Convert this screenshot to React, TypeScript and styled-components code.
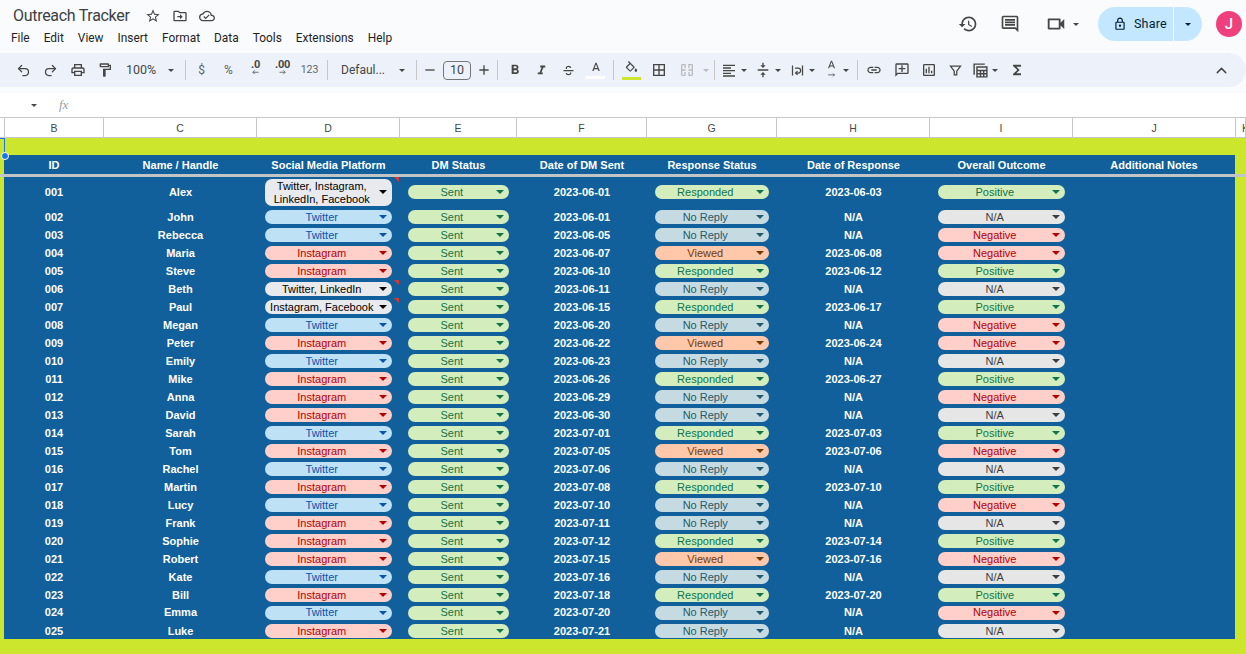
import React from "react";
import styled, { createGlobalStyle } from "styled-components";
import { Undo2, Redo2, ChevronUp } from "lucide-react";

const Global = createGlobalStyle`
  html, body { margin: 0; padding: 0; background: #f9fbfd; overflow: hidden; }
  body { font-family: "Liberation Sans", Arial, sans-serif; width: 1246px; height: 654px; }
`;

const Page = styled.div`
  width: 1246px;
  height: 654px;
  display: flex;
  flex-direction: column;
  background: #f9fbfd;
  overflow: hidden;
`;

/* ---------- top bar ---------- */
const TopBar = styled.header`
  height: 53px;
  display: flex;
  justify-content: space-between;
  flex: none;
`;
const TitleBlock = styled.div`
  display: flex;
  flex-direction: column;
`;
const TitleRow = styled.div`
  height: 28px;
  padding: 4px 0 0 13px;
  box-sizing: border-box;
  display: flex;
  align-items: center;
`;
const Title = styled.div`
  font: 400 16px/20px Roboto, sans-serif;
  letter-spacing: -0.3px;
  color: #3c4043;
  width: 126px;
  white-space: nowrap;
`;
const TitleIcon = styled.div`
  width: 27px;
  display: flex;
  justify-content: center;
  color: #444746;
`;
const Menu = styled.nav`
  display: flex;
  gap: 14px;
  padding: 2px 0 0 11px;
  font: 400 11.9px/16px Roboto, sans-serif;
  color: #1f1f1f;
`;
const Actions = styled.div`
  display: flex;
  align-items: center;
  height: 34px;
  margin-top: 7px;
  padding-right: 4px;
`;
const ActionIcon = styled.div<{ $w: number }>`
  width: ${(p) => p.$w}px;
  display: flex;
  align-items: center;
  justify-content: center;
  color: #444746;
`;
const ActionGap = styled.div`
  width: 10px;
`;
const SharePill = styled.div`
  width: 104px;
  height: 34px;
  border-radius: 17px;
  background: #c2e7ff;
  display: flex;
  align-items: center;
  color: #001d35;
  overflow: hidden;
  margin-left: 17px;
`;
const ShareMain = styled.div`
  width: 76px;
  height: 34px;
  display: flex;
  align-items: center;
  gap: 7px;
  padding-left: 15px;
  box-sizing: border-box;
  border-right: 1px solid #f9fbfd;
  font: 400 12.5px/16px Roboto, sans-serif;
  letter-spacing: 0.2px;
  flex: none;
`;
const ShareCaret = styled.div`
  flex: 1;
  display: flex;
  justify-content: center;
`;
const Avatar = styled.div`
  width: 26px;
  height: 26px;
  border-radius: 50%;
  background: #ef3f7c;
  color: #fff;
  margin-left: 14px;
  display: flex;
  align-items: center;
  justify-content: center;
  font: 500 15px/26px Roboto, sans-serif;
`;

/* ---------- toolbar ---------- */
const Toolbar = styled.div`
  height: 34px;
  flex: none;
  background: #edf2fa;
  border-radius: 0 17px 17px 0;
  display: flex;
  align-items: center;
  padding: 0 11px 0 10px;
  box-sizing: border-box;
  color: #444746;
`;
const Slot = styled.div<{ $w?: number }>`
  width: ${(p) => p.$w ?? 27}px;
  flex: none;
  height: 24px;
  display: flex;
  align-items: center;
  justify-content: center;
`;
const CaretSlot = styled(Slot)`
  width: 8px;
`;
const ToolGroup = styled.div<{ $w: number }>`
  width: ${(p) => p.$w}px;
  flex: none;
  display: flex;
  align-items: center;
`;
const Sep = styled.div<{ $w: number }>`
  width: ${(p) => p.$w}px;
  flex: none;
  display: flex;
  justify-content: center;
  &::after {
    content: "";
    width: 1px;
    height: 20px;
    background: #c7c7c7;
  }
`;
const Caret = styled.span<{ $c?: string; $off?: boolean }>`
  width: 0;
  height: 0;
  border-left: 3.5px solid transparent;
  border-right: 3.5px solid transparent;
  border-top: 3.5px solid ${(p) => (p.$off ? "#b9bcbf" : p.$c ?? "#444746")};
  display: inline-block;
`;
const ZoomSelect = styled.div`
  width: 65px;
  flex: none;
  display: flex;
  align-items: center;
  justify-content: space-between;
  padding: 0 9px 0 8px;
  box-sizing: border-box;
  font: 400 12.5px/16px Roboto, sans-serif;
`;
const FontSelect = styled.div`
  width: 80px;
  flex: none;
  display: flex;
  align-items: center;
  justify-content: space-between;
  padding: 0 6px 0 10px;
  box-sizing: border-box;
  font: 400 12px/16px Roboto, sans-serif;
`;
const FormatGlyph = styled.span<{ $size?: number }>`
  font: 400 ${(p) => p.$size ?? 11}px/12px Roboto, sans-serif;
  color: #5f6368;
`;
const DecimalIcon = styled.div`
  display: flex;
  flex-direction: column;
  align-items: center;
  font: 700 11px/10px Roboto, sans-serif;
  letter-spacing: -0.3px;
  color: #444746;
  height: 20px;
`;
const SizeBox = styled.div`
  width: 28px;
  height: 19px;
  border: 1px solid #747775;
  border-radius: 4px;
  box-sizing: border-box;
  display: flex;
  align-items: center;
  justify-content: center;
  font: 400 12.5px/16px Roboto, sans-serif;
  color: #444746;
`;
const ColorStack = styled.div`
  display: flex;
  flex-direction: column;
  align-items: center;
  gap: 1px;
`;
const ColorBar = styled.div<{ $c: string }>`
  width: 19px;
  height: 3px;
  background: ${(p) => p.$c};
`;
const Spacer = styled.div`
  flex: 1;
`;

/* ---------- formula bar ---------- */
const FormulaBar = styled.div`
  margin-top: 6px;
  height: 24px;
  flex: none;
  background: #fff;
  display: flex;
  align-items: center;
  padding-left: 31px;
`;
const FxLabel = styled.span`
  margin-left: 22px;
  font: italic 400 13px/16px "Liberation Serif", serif;
  color: #9aa0a6;
`;

/* ---------- sheet ---------- */
const ColumnBar = styled.div`
  height: 21px;
  flex: none;
  display: grid;
  grid-template-columns: 5px 99px 153px 143px 117px 130px 130px 153px 143px 163px 10px;
  background: #fff;
  border-top: 1px solid #c7c7c7;
  box-sizing: border-box;
`;
const ColumnCell = styled.div<{ $edge?: boolean }>`
  border-right: 1px solid #c7c7c7;
  border-bottom: 1px solid #c7c7c7;
  box-sizing: border-box;
  display: flex;
  align-items: center;
  justify-content: ${(p) => (p.$edge ? "flex-start" : "center")};
  padding-left: ${(p) => (p.$edge ? 6 : 0)}px;
  font: 400 10.5px/14px "Liberation Sans", Arial, sans-serif;
  color: #444746;
  overflow: hidden;
`;
const Sheet = styled.section`
  position: relative;
  flex: 1;
  background: #cbe62d;
  padding-top: 17px;
  box-sizing: border-box;
`;
const HeadRow = styled.div`
  margin: 0 11px 0 4px;
  height: 19px;
  display: grid;
  grid-template-columns: 100px 153px 143px 117px 130px 130px 153px 143px 162px;
  background: #11609b;
  align-items: start;
  text-align: center;
  font: 700 11px/20px "Liberation Sans", Arial, sans-serif;
  color: #fff;
`;
const Divider = styled.div`
  height: 3px;
  background: #c2c5c6;
`;
const Rows = styled.div`
  margin: 0 11px 0 4px;
  height: 462px;
  overflow: hidden;
  background: #11609b;
`;
const Row = styled.div<{ $h: number }>`
  height: ${(p) => p.$h}px;
  display: grid;
  grid-template-columns: 100px 153px 143px 117px 130px 130px 153px 143px 162px;
  align-items: center;
  &:first-child {
    margin-bottom: 1px;
  }
`;
const TextCell = styled.div<{ $lift?: boolean }>`
  text-align: center;
  font: 700 11px/14px "Liberation Sans", Arial, sans-serif;
  color: #fff;
  padding-bottom: ${(p) => (p.$lift ? 2 : 0)}px;
`;
const ChipCell = styled.div`
  position: relative;
  height: 100%;
  padding: 0 8px 0 7.5px;
  display: flex;
  align-items: center;
`;
const Note = styled.span`
  position: absolute;
  top: 0;
  right: 1px;
  width: 0;
  height: 0;
  border-top: 5px solid #e0352b;
  border-left: 5px solid transparent;
`;

const tones = {
  green: { bg: "#d4edbc", fg: "#11734b" },
  gray: { bg: "#e6e6e6", fg: "#3d3d3d" },
  red: { bg: "#ffcfc9", fg: "#b10202" },
  blue: { bg: "#bfe1f6", fg: "#0a53a8" },
  peach: { bg: "#ffc8aa", fg: "#753800" },
  slate: { bg: "#c6dbe1", fg: "#215a6c" },
  plain: { bg: "#e8eaed", fg: "#000000" },
};
type Tone = keyof typeof tones;

const Chip = styled.div<{ $tone: Tone; $tall?: boolean }>`
  flex: 1;
  height: ${(p) => (p.$tall ? 27 : 14)}px;
  border-radius: 7px;
  background: ${(p) => tones[p.$tone].bg};
  color: ${(p) => tones[p.$tone].fg};
  display: flex;
  align-items: center;
  font: 400 11px/13px "Liberation Sans", Arial, sans-serif;
`;
const ChipLabel = styled.span<{ $lift?: boolean }>`
  flex: 1;
  text-align: center;
  white-space: pre-line;
  padding-top: ${(p) => (p.$lift ? 0 : 1)}px;
  padding-bottom: ${(p) => (p.$lift ? 1 : 0)}px;
`;
const ChipArrow = styled(Caret)`
  margin: 0 5px 0 0;
  flex: none;
  border-left-width: 4px;
  border-right-width: 4px;
  border-top-width: 4px;
`;
const SelectionV = styled.div`
  position: absolute;
  left: 4px;
  top: 0;
  width: 1px;
  height: 18px;
  background: #1a73e8;
`;
const SelectionH = styled.div`
  position: absolute;
  left: 0;
  top: 0;
  width: 5px;
  height: 1px;
  background: #1a73e8;
`;
const SelectionDot = styled.div`
  position: absolute;
  left: 1px;
  top: 14px;
  width: 6px;
  height: 6px;
  border-radius: 50%;
  background: #1a73e8;
  border: 1px solid #fff;
`;
const Ic = styled.svg`
  display: block;
  fill: currentColor;
  flex: none;
`;
const IcLine = styled(Ic)<{ $off?: boolean }>`
  fill: none;
  stroke: ${(p) => (p.$off ? "#b9bcbf" : "currentColor")};
  stroke-width: 2;
`;

const P: React.FC<{ d: string; s?: number }> = ({ d, s = 16 }) => (
  <Ic width={s} height={s} viewBox="0 0 24 24">
    <path d={d} />
  </Ic>
);
const L: React.FC<{ d: string; s?: number; off?: boolean }> = ({ d, s = 16, off }) => (
  <IcLine width={s} height={s} viewBox="0 0 24 24" $off={off}>
    <path d={d} />
  </IcLine>
);

const PLATFORM: Record<string, Tone> = {
  T: "blue",
  I: "red",
};
type R = [string, string, string, string, string, string, string];
const DATA: R[] = [
  ["001", "Alex", "Twitter, Instagram,\nLinkedIn, Facebook", "06-01", "Responded", "2023-06-03", "Positive"],
  ["002", "John", "Twitter", "06-01", "No Reply", "N/A", "N/A"],
  ["003", "Rebecca", "Twitter", "06-05", "No Reply", "N/A", "Negative"],
  ["004", "Maria", "Instagram", "06-07", "Viewed", "2023-06-08", "Negative"],
  ["005", "Steve", "Instagram", "06-10", "Responded", "2023-06-12", "Positive"],
  ["006", "Beth", "Twitter, LinkedIn", "06-11", "No Reply", "N/A", "N/A"],
  ["007", "Paul", "Instagram, Facebook", "06-15", "Responded", "2023-06-17", "Positive"],
  ["008", "Megan", "Twitter", "06-20", "No Reply", "N/A", "Negative"],
  ["009", "Peter", "Instagram", "06-22", "Viewed", "2023-06-24", "Negative"],
  ["010", "Emily", "Twitter", "06-23", "No Reply", "N/A", "N/A"],
  ["011", "Mike", "Instagram", "06-26", "Responded", "2023-06-27", "Positive"],
  ["012", "Anna", "Instagram", "06-29", "No Reply", "N/A", "Negative"],
  ["013", "David", "Instagram", "06-30", "No Reply", "N/A", "N/A"],
  ["014", "Sarah", "Twitter", "07-01", "Responded", "2023-07-03", "Positive"],
  ["015", "Tom", "Instagram", "07-05", "Viewed", "2023-07-06", "Negative"],
  ["016", "Rachel", "Twitter", "07-06", "No Reply", "N/A", "N/A"],
  ["017", "Martin", "Instagram", "07-08", "Responded", "2023-07-10", "Positive"],
  ["018", "Lucy", "Twitter", "07-10", "No Reply", "N/A", "Negative"],
  ["019", "Frank", "Instagram", "07-11", "No Reply", "N/A", "N/A"],
  ["020", "Sophie", "Instagram", "07-12", "Responded", "2023-07-14", "Positive"],
  ["021", "Robert", "Instagram", "07-15", "Viewed", "2023-07-16", "Negative"],
  ["022", "Kate", "Twitter", "07-16", "No Reply", "N/A", "N/A"],
  ["023", "Bill", "Instagram", "07-18", "Responded", "2023-07-20", "Positive"],
  ["024", "Emma", "Twitter", "07-20", "No Reply", "N/A", "Negative"],
  ["025", "Luke", "Instagram", "07-21", "No Reply", "N/A", "N/A"],
];
const responseTone: Record<string, Tone> = { Responded: "green", "No Reply": "slate", Viewed: "peach" };
const outcomeTone: Record<string, Tone> = { Positive: "green", Negative: "red", "N/A": "gray" };

const Pill: React.FC<{ tone: Tone; text: string; lift?: boolean; tall?: boolean; note?: boolean }> = ({
  tone,
  text,
  lift,
  tall,
  note,
}) => (
  <ChipCell>
    <Chip $tone={tone} $tall={tall}>
      <ChipLabel $lift={lift}>{text}</ChipLabel>
      <ChipArrow $c={tones[tone].fg} />
    </Chip>
    {note && <Note />}
  </ChipCell>
);

const I = {
  star: "M22 9.24l-7.19-.62L12 2 9.19 8.63 2 9.24l5.46 4.73L5.82 21 12 17.27 18.18 21l-1.63-7.03L22 9.24zM12 15.4l-3.76 2.27 1-4.28-3.32-2.88 4.38-.38L12 6.1l1.71 4.04 4.38.38-3.32 2.88 1 4.28L12 15.4z",
  folder: "M20 6h-8l-2-2H4c-1.1 0-2 .9-2 2v12c0 1.1.9 2 2 2h16c1.1 0 2-.9 2-2V8c0-1.1-.9-2-2-2zm0 12H4V6h5.17l2 2H20v10zm-8-1l4-4-4-4v3H8v2h4v3z",
  cloud: "M19.35 10.04C18.67 6.59 15.64 4 12 4 9.11 4 6.6 5.64 5.35 8.04 2.34 8.36 0 10.91 0 14c0 3.31 2.69 6 6 6h13c2.76 0 5-2.24 5-5 0-2.64-2.05-4.78-4.65-4.96zM19 18H6c-2.21 0-4-1.79-4-4 0-2.05 1.53-3.76 3.56-3.97l1.07-.11.5-.95C8.08 7.14 9.94 6 12 6c2.62 0 4.88 1.86 5.39 4.43l.3 1.5 1.53.11c1.56.1 2.78 1.41 2.78 2.96 0 1.65-1.35 3-3 3zm-9-3.82l-2.09-2.09L6.5 13.5 10 17l6-6-1.41-1.41z",
  history: "M13 3c-4.97 0-9 4.03-9 9H1l3.89 3.89.07.14L9 12H6c0-3.87 3.13-7 7-7s7 3.13 7 7-3.13 7-7 7c-1.93 0-3.68-.79-4.94-2.06l-1.42 1.42C8.27 19.99 10.51 21 13 21c4.97 0 9-4.03 9-9s-4.03-9-9-9zm-1 5v5l4.28 2.54.72-1.21-3.5-2.08V8H12z",
  comment: "M21.99 4c0-1.1-.89-2-1.99-2H4c-1.1 0-2 .9-2 2v12c0 1.1.9 2 2 2h14l4 4-.01-18zM20 4v13.17L18.83 16H4V4h16zM6 12h12v2H6zm0-3h12v2H6zm0-3h12v2H6z",
  video: "M17 10.5V7c0-.55-.45-1-1-1H4c-.55 0-1 .45-1 1v10c0 .55.45 1 1 1h12c.55 0 1-.45 1-1v-3.5l4 4v-11l-4 4zM15 16H5V8h10v8z",
  lock: "M18 8h-1V6c0-2.76-2.24-5-5-5S7 3.24 7 6v2H6c-1.1 0-2 .9-2 2v10c0 1.1.9 2 2 2h12c1.1 0 2-.9 2-2V10c0-1.1-.9-2-2-2zM9 6c0-1.66 1.34-3 3-3s3 1.34 3 3v2H9V6zm9 14H6V10h12v10zm-6-3c1.1 0 2-.9 2-2s-.9-2-2-2-2 .9-2 2 .9 2 2 2z",
  print: "M19 8h-1V3H6v5H5c-1.66 0-3 1.34-3 3v6h4v4h12v-4h4v-6c0-1.66-1.34-3-3-3zM8 5h8v3H8V5zm8 12v2H8v-4h8v2zm2-2v-2H6v2H4v-4c0-.55.45-1 1-1h14c.55 0 1 .45 1 1v4h-2z",
  paint: "M18 4V3c0-.55-.45-1-1-1H5c-.55 0-1 .45-1 1v4c0 .55.45 1 1 1h12c.55 0 1-.45 1-1V6h1v4H9v11c0 .55.45 1 1 1h2c.55 0 1-.45 1-1v-9h8V4h-3zm-2 2H6V4h10v2z",
  minus: "M5 11h14v2H5z",
  plus: "M19 13h-6v6h-2v-6H5v-2h6V5h2v6h6v2z",
  bold: "M15.6 10.79c.97-.67 1.65-1.77 1.65-2.79 0-2.26-1.75-4-4-4H7v14h7.04c2.09 0 3.71-1.7 3.71-3.79 0-1.52-.86-2.82-2.15-3.42zM10 6.5h3c.83 0 1.5.67 1.5 1.5s-.67 1.5-1.5 1.5h-3v-3zm3.5 9H10v-3h3.5c.83 0 1.5.67 1.5 1.5s-.67 1.5-1.5 1.5z",
  italic: "M10 4v3h2.21l-3.42 8H6v3h8v-3h-2.21l3.42-8H18V4z",
  strike: "M4 11h16v2H4zM7.5 8.5C7.5 6 9.5 4.5 12 4.5c2.3 0 3.9 1.1 4.4 3l-2 .5c-.3-1-1.2-1.6-2.4-1.6-1.4 0-2.4.7-2.4 1.7V9.5h-2zM16.4 15c.1.3.1.6.1.9 0 2.3-2 3.6-4.5 3.6-2.4 0-4.1-1.2-4.6-3.1l2-.5c.3 1.1 1.3 1.7 2.6 1.7 1.4 0 2.5-.6 2.5-1.7 0-.3-.1-.6-.2-.9z",
  letterA: "M11 3L5.5 17h2.25l1.12-3h6.25l1.12 3h2.25L13 3h-2zm-1.38 9L12 5.67 14.38 12H9.62z",
  fill: "M16.56 8.94L7.62 0 6.21 1.41l2.38 2.38-5.15 5.15c-.59.59-.59 1.54 0 2.12l5.5 5.5c.29.29.68.44 1.06.44s.77-.15 1.06-.44l5.5-5.5c.59-.58.59-1.53 0-2.12zM5.21 10L10 5.21 14.79 10H5.21zM19 11.5s-2 2.17-2 3.5c0 1.1.9 2 2 2s2-.9 2-2c0-1.33-2-3.5-2-3.5z M5 10h10l-5 5z",
  borders: "M3 3v18h18V3H3zm8 16H5v-6h6v6zm0-8H5V5h6v6zm8 8h-6v-6h6v6zm0-8h-6V5h6v6z",
  align: "M3 4h18v2H3zm0 4h12v2H3zm0 4h18v2H3zm0 4h12v2H3zm0 4h18v2H3z",
  valign: "M8 19h3v4h2v-4h3l-4-4-4 4zm8-14h-3V1h-2v4H8l4 4 4-4zM4 11v2h16v-2H4z",
  link: "M3.9 12c0-1.71 1.39-3.1 3.1-3.1h4V7H7c-2.76 0-5 2.24-5 5s2.24 5 5 5h4v-1.9H7c-1.71 0-3.1-1.39-3.1-3.1zM8 13h8v-2H8v2zm9-6h-4v1.9h4c1.71 0 3.1 1.39 3.1 3.1s-1.39 3.1-3.1 3.1h-4V17h4c2.76 0 5-2.24 5-5s-2.24-5-5-5z",
  addComment: "M20 2H4c-1.1 0-2 .9-2 2v18l4-4h14c1.1 0 2-.9 2-2V4c0-1.1-.9-2-2-2zm0 14H5.17L4 17.17V4h16v12zM13 5h-2v4H7v2h4v4h2v-4h4V9h-4V5z",
  chart: "M19 3H5c-1.1 0-2 .9-2 2v14c0 1.1.9 2 2 2h14c1.1 0 2-.9 2-2V5c0-1.1-.9-2-2-2zm0 16H5V5h14v14zM7 10h2v7H7zm4-3h2v10h-2zm4 6h2v4h-2z",
  sigma: "M18 4H6v2l6.5 6L6 18v2h12v-3h-7l5-5-5-5h7z",
};

export default function App() {
  return (
    <Page>
      <Global />
      <TopBar>
        <TitleBlock>
          <TitleRow>
            <Title>Outreach Tracker</Title>
            <TitleIcon><P d={I.star} /></TitleIcon>
            <TitleIcon><P d={I.folder} /></TitleIcon>
            <TitleIcon><P d={I.cloud} /></TitleIcon>
          </TitleRow>
          <Menu>
            <span>File</span><span>Edit</span><span>View</span><span>Insert</span><span>Format</span>
            <span>Data</span><span>Tools</span><span>Extensions</span><span>Help</span>
          </Menu>
        </TitleBlock>
        <Actions>
          <ActionIcon $w={42}><P d={I.history} s={20} /></ActionIcon>
          <ActionIcon $w={42}><P d={I.comment} s={20} /></ActionIcon>
          <ActionGap />
          <ActionIcon $w={30}><P d={I.video} s={22} /></ActionIcon>
          <ActionIcon $w={10}><Caret /></ActionIcon>
          <SharePill>
            <ShareMain><P d={I.lock} s={14} />Share</ShareMain>
            <ShareCaret><Caret $c="#001d35" /></ShareCaret>
          </SharePill>
          <Avatar>J</Avatar>
        </Actions>
      </TopBar>

      <Toolbar>
        <Slot><Undo2 size={15} strokeWidth={2} /></Slot>
        <Slot><Redo2 size={15} strokeWidth={2} /></Slot>
        <Slot><P d={I.print} /></Slot>
        <Slot><P d={I.paint} /></Slot>
        <ZoomSelect>100%<Caret /></ZoomSelect>
        <Sep $w={5} />
        <Slot><FormatGlyph $size={12}>$</FormatGlyph></Slot>
        <Slot><FormatGlyph $size={12}>%</FormatGlyph></Slot>
        <Slot>
          <DecimalIcon>.0
            <L d="M20 6H5M10 1L5 6l5 5" s={9} />
          </DecimalIcon>
        </Slot>
        <Slot>
          <DecimalIcon>.00
            <L d="M4 6h15M14 1l5 5-5 5" s={9} />
          </DecimalIcon>
        </Slot>
        <Slot><FormatGlyph $size={10.5}>123</FormatGlyph></Slot>
        <Sep $w={8} />
        <FontSelect>Defaul...<Caret /></FontSelect>
        <Sep $w={10} />
        <Slot $w={18}><P d={I.minus} /></Slot>
        <Slot $w={36}><SizeBox>10</SizeBox></Slot>
        <Slot $w={18}><P d={I.plus} /></Slot>
        <Sep $w={8} />
        <Slot><P d={I.bold} /></Slot>
        <Slot><P d={I.italic} s={15} /></Slot>
        <Slot><P d={I.strike} s={15} /></Slot>
        <Slot>
          <ColorStack>
            <P d={I.letterA} s={14} />
            <ColorBar $c="#ffffff" />
          </ColorStack>
        </Slot>
        <Sep $w={8} />
        <Slot $w={28}>
          <ColorStack>
            <P d={I.fill} s={15} />
            <ColorBar $c="#cbe62d" />
          </ColorStack>
        </Slot>
        <Slot $w={28}><P d={I.borders} /></Slot>
        <Slot $w={28}>
          <L off d="M4 4h5v5M20 4h-5v5M4 20h5v-5M20 20h-5v-5M4 4v16M20 4v16M5 12h5M19 12h-5" s={16} />
        </Slot>
        <Slot $w={9}><Caret $off /></Slot>
        <Sep $w={8} />
        <ToolGroup $w={34}>
          <Slot $w={22}><P d={I.align} /></Slot>
          <CaretSlot><Caret /></CaretSlot>
        </ToolGroup>
        <ToolGroup $w={34}>
          <Slot $w={22}><P d={I.valign} /></Slot>
          <CaretSlot><Caret /></CaretSlot>
        </ToolGroup>
        <ToolGroup $w={34}>
          <Slot $w={22}><L d="M4 4v16M20 4v16M8 8h5a4 4 0 0 1 0 8h-3M12 13l-3 3 3 3" s={15} /></Slot>
          <CaretSlot><Caret /></CaretSlot>
        </ToolGroup>
        <ToolGroup $w={34}>
          <Slot $w={22}>
            <ColorStack>
              <P d={I.letterA} s={13} />
              <L d="M3 5h17M16 1l4 4-4 4" s={9} />
            </ColorStack>
          </Slot>
          <CaretSlot><Caret /></CaretSlot>
        </ToolGroup>
        <Sep $w={6} />
        <Slot $w={28}><P d={I.link} /></Slot>
        <Slot><P d={I.addComment} /></Slot>
        <Slot><P d={I.chart} /></Slot>
        <Slot><L d="M4 5h16l-6 8v6h-4v-6z" s={15} /></Slot>
        <ToolGroup $w={34}>
          <Slot $w={22}><L d="M3 18V3h15M7 7h14v14H7zM7 12h14M12 12v9M16.5 12v9M7 16.500h14" s={17} /></Slot>
          <CaretSlot><Caret /></CaretSlot>
        </ToolGroup>
        <Slot><P d={I.sigma} /></Slot>
        <Spacer />
        <Slot><ChevronUp size={17} strokeWidth={2} /></Slot>
      </Toolbar>

      <FormulaBar>
        <Caret />
        <FxLabel>fx</FxLabel>
      </FormulaBar>

      <ColumnBar>
        <ColumnCell />
        {["B", "C", "D", "E", "F", "G", "H", "I", "J"].map((c) => (
          <ColumnCell key={c}>{c}</ColumnCell>
        ))}
        <ColumnCell $edge>K</ColumnCell>
      </ColumnBar>

      <Sheet>
        <SelectionV />
        <SelectionH />
        <SelectionDot />
        <HeadRow>
          <div>ID</div>
          <div>Name / Handle</div>
          <div>Social Media Platform</div>
          <div>DM Status</div>
          <div>Date of DM Sent</div>
          <div>Response Status</div>
          <div>Date of Response</div>
          <div>Overall Outcome</div>
          <div>Additional Notes</div>
        </HeadRow>
        <Divider />
        <Rows>
          {DATA.map((r, i) => {
            const multi = r[2].includes(",");
            const lift = r[0] === "024";
            const tone: Tone = multi ? "plain" : PLATFORM[r[2][0]];
            return (
              <Row key={r[0]} $h={i === 0 ? 30 : 18}>
                <TextCell $lift={lift}>{r[0]}</TextCell>
                <TextCell $lift={lift}>{r[1]}</TextCell>
                <Pill tone={tone} text={r[2]} lift={lift} tall={i === 0} note={multi} />
                <Pill tone="green" text="Sent" lift={lift} />
                <TextCell $lift={lift}>2023-{r[3]}</TextCell>
                <Pill tone={responseTone[r[4]]} text={r[4]} lift={lift} />
                <TextCell $lift={lift}>{r[5]}</TextCell>
                <Pill tone={outcomeTone[r[6]]} text={r[6]} lift={lift} />
                <div />
              </Row>
            );
          })}
        </Rows>
      </Sheet>
    </Page>
  );
}
